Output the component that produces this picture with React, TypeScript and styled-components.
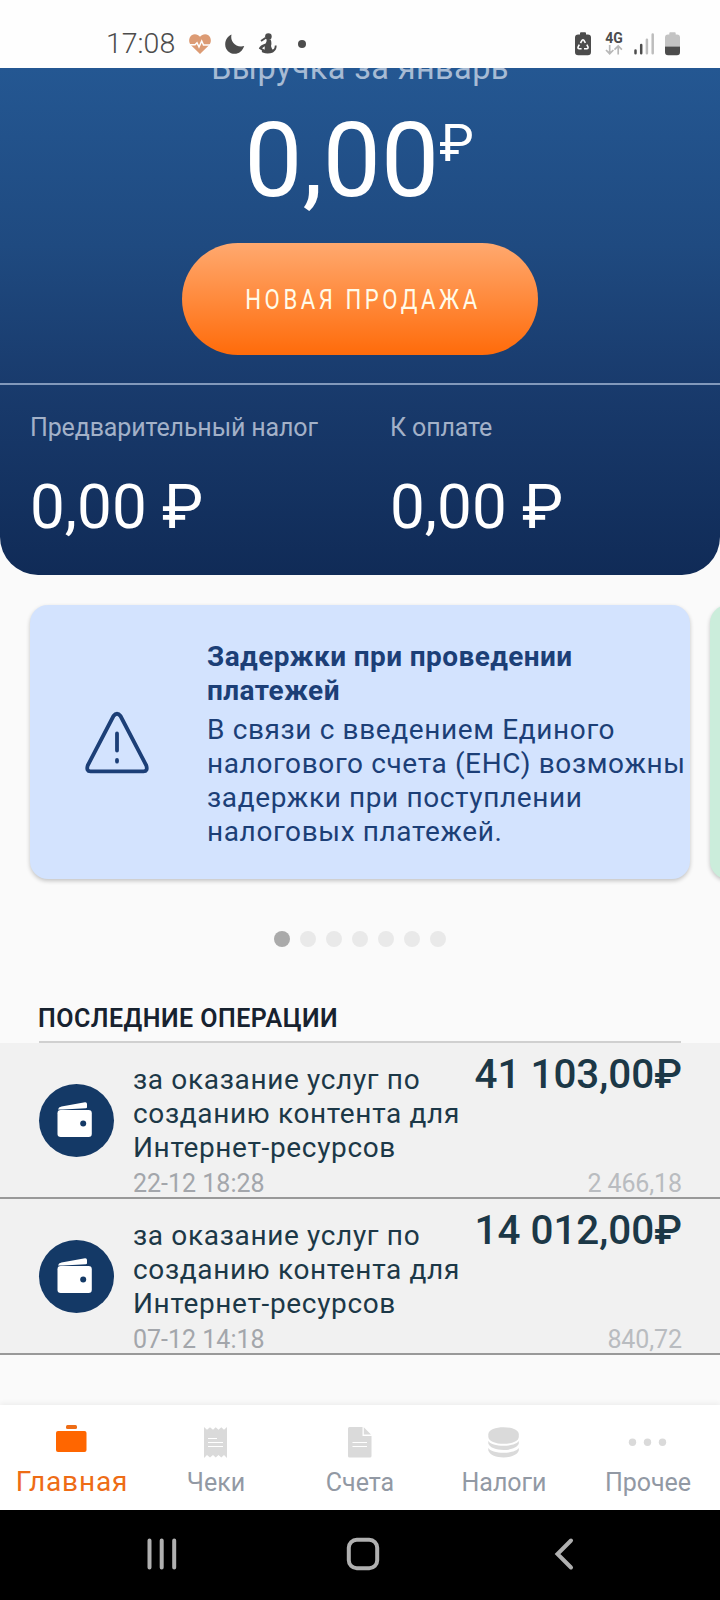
import React from 'react';
import styled, { createGlobalStyle } from 'styled-components';

const GlobalStyle = createGlobalStyle`
  *, *::before, *::after { box-sizing: border-box; }
  body {
    margin: 0;
    background: #fafafa;
    font-family: Roboto, "Liberation Sans", sans-serif;
  }
`;

const Screen = styled.div`
  width: 720px;
  height: 1600px;
  display: flex;
  flex-direction: column;
  overflow: hidden;
  background: #fafafa;
`;

/* ---------- status bar ---------- */

const StatusBar = styled.header`
  flex: none;
  height: 68px;
  padding: 19px 40px 0 106px;
  display: flex;
  justify-content: space-between;
  background: #fefefe;
  color: #4c4c4c;
`;

const StatusGroup = styled.div`
  display: flex;
  align-items: center;
  height: 49px;
`;

const Clock = styled.span`
  width: 83px;
  font-size: 28.5px;
  font-weight: 350;
  line-height: 48px;
  white-space: nowrap;
`;

const StatusIcon = styled.svg<{ $gap?: number }>`
  display: block;
  flex: none;
  margin-right: ${(p) => p.$gap ?? 0}px;
`;

const Network = styled.div`
  width: 18px;
  height: 24px;
  margin-right: 11px;
  display: flex;
  flex-direction: column;
  align-items: center;
  font-size: 14px;
  font-weight: 700;
  line-height: 12px;
`;

/* ---------- revenue panel ---------- */

const Hero = styled.section`
  flex: none;
  height: 507px;
  display: flex;
  flex-direction: column;
  align-items: center;
  overflow: hidden;
  border-radius: 0 0 38px 38px;
  background: linear-gradient(#245792 0%, #1f4a80 35%, #193b6d 62%, #102b57 100%);
  color: #fff;
`;

const HeroCaption = styled.div`
  flex: none;
  margin-top: -20px;
  font-size: 32.5px;
  line-height: 40px;
  letter-spacing: 0.4px;
  color: #a7bbd4;
`;

const Revenue = styled.div`
  flex: none;
  display: flex;
  margin: 13px 2px 0 0;
  font-size: 103.5px;
  line-height: 120px;
`;

const RevenueCurrency = styled.span`
  margin-top: 12px;
  font-size: 52px;
  line-height: 62px;
`;

const SaleButton = styled.button`
  flex: none;
  width: 356px;
  height: 112px;
  margin-top: 22px;
  padding: 2px 0 0;
  border: 0;
  border-radius: 56px;
  background: linear-gradient(#ffa96f, #ff6b0a);
  color: #fffbe9;
  font: 400 28px/110px Roboto, sans-serif;
`;

const SaleLabel = styled.span`
  display: inline-block;
  margin-right: -5px;
  letter-spacing: 4.5px;
  white-space: nowrap;
  transform: scaleX(0.79);
`;

const TaxRow = styled.div`
  flex: 1;
  width: 100%;
  margin-top: 28px;
  padding-top: 28px;
  border-top: 2px solid #8299bb;
  display: grid;
  grid-template-columns: 1fr 1fr;
`;

const TaxCell = styled.div`
  padding-left: 30px;
`;

const TaxLabel = styled.div`
  font-size: 25px;
  line-height: 30px;
  letter-spacing: -0.13px;
  color: #a3b1c8;
`;

const TaxValue = styled.div`
  margin-top: 28px;
  font-size: 62px;
  line-height: 72px;
  white-space: nowrap;
`;

/* ---------- notice carousel ---------- */

const Carousel = styled.div`
  flex: none;
  display: flex;
  gap: 20px;
  margin: 30px 0 0 30px;
`;

const NoticeCard = styled.article<{ $color: string }>`
  flex: none;
  width: 660px;
  height: 274px;
  display: flex;
  border-radius: 18px;
  background: ${(p) => p.$color};
  box-shadow: 0 2px 4px rgba(0, 0, 0, 0.22);
  color: #1c3f77;
`;

const NoticeIcon = styled.div`
  width: 177px;
  padding: 106px 0 0 54px;
`;

const NoticeText = styled.div`
  padding-top: 35px;
  font-size: 28px;
  line-height: 34px;
  white-space: nowrap;
`;

const NoticeTitle = styled.h2`
  margin: 0 0 5px;
  font-size: 28px;
  font-weight: 700;
  line-height: 34px;
  letter-spacing: 0.4px;
`;

const NoticeBody = styled.p`
  margin: 0;
  letter-spacing: 0.62px;
`;

const Pager = styled.div`
  flex: none;
  display: flex;
  justify-content: center;
  gap: 10px;
  margin-top: 52px;
`;

const PagerDot = styled.span<{ $active?: boolean }>`
  width: 16px;
  height: 16px;
  border-radius: 50%;
  background: ${(p) => (p.$active ? '#aaaaaa' : '#e9e9e9')};
`;

/* ---------- operations ---------- */

const SectionTitle = styled.h3`
  flex: none;
  height: 42px;
  margin: 54px 39px 0;
  border-bottom: 2px solid #d0d0d0;
  font-size: 25px;
  font-weight: 600;
  line-height: 36px;
  letter-spacing: 0.5px;
  text-indent: -1px;
  color: #17222f;
`;

const Operation = styled.div`
  flex: none;
  height: 156px;
  padding: 0 38px 0 39px;
  display: flex;
  border-bottom: 2px solid #999;
  background: #f1f1f1;
  color: #1c3847;
`;

const WalletBadge = styled.div`
  flex: none;
  width: 75px;
  height: 73px;
  margin: 41px 19px 0 0;
  border-radius: 50%;
  background: #143966;
`;

const OperationInfo = styled.div`
  flex: 1;
  padding-top: 20px;
  white-space: nowrap;
`;

const OperationName = styled.div`
  font-size: 28px;
  line-height: 34px;
  letter-spacing: 0.65px;
`;

const OperationDate = styled.div`
  margin-top: 4px;
  font-size: 25px;
  line-height: 30px;
  color: #a3a6ab;
`;

const OperationSums = styled.div`
  display: flex;
  flex-direction: column;
  align-items: flex-end;
  white-space: nowrap;
`;

const Amount = styled.div`
  padding-top: 8px;
  font-size: 40.4px;
  font-weight: 500;
  line-height: 48px;
`;

const Tax = styled.div`
  margin-top: 70px;
  font-size: 25px;
  line-height: 30px;
  letter-spacing: -0.1px;
  color: #b9bcc0;
`;

/* ---------- bottom navigation ---------- */

const TabBar = styled.nav`
  flex: none;
  height: 105px;
  margin-top: auto;
  display: grid;
  grid-template-columns: repeat(5, 1fr);
  background: #fff;
  box-shadow: 0 -2px 5px rgba(0, 0, 0, 0.05);
`;

const Tab = styled.div<{ $active?: boolean }>`
  display: flex;
  flex-direction: column;
  align-items: center;
  font-size: ${(p) => (p.$active ? 28 : 25)}px;
  line-height: 30px;
  color: ${(p) => (p.$active ? '#ee6c15' : '#9299a4')};
`;

const TabIcon = styled.svg`
  display: block;
  flex: none;
  width: 48px;
  height: 40px;
  margin-top: 17px;
`;

const TabLabel = styled.span<{ $active?: boolean }>`
  margin-top: ${(p) => (p.$active ? 5 : 6)}px;
  letter-spacing: ${(p) => (p.$active ? 0.85 : 0)}px;
`;

const SystemBar = styled.footer`
  flex: none;
  height: 90px;
  padding: 0 56px 3px 61px;
  display: grid;
  grid-template-columns: repeat(3, 201px);
  place-items: center;
  background: #000;
`;

const WalletIcon = () => (
  <svg width="75" height="73" viewBox="0 0 75 73" fill="#fff">
    <path d="M19 25.5 Q19.5 23 22.5 22.6 L46 18.2 Q48 18 48 20 V23.3 Q48 24.3 46.8 24.3 L24 25.5 Z" />
    <rect x="18.5" y="26" width="34.3" height="27" rx="3.2" />
    <circle cx="44.2" cy="39.4" r="3" fill="#143966" />
  </svg>
);

const operations = [
  { date: '22-12 18:28', amount: '41 103,00₽', tax: '2 466,18' },
  { date: '07-12 14:18', amount: '14 012,00₽', tax: '840,72' },
];

const grey = '#dadada';

export default function App() {
  return (
    <>
      <GlobalStyle />
      <Screen>
        <StatusBar>
          <StatusGroup>
            <Clock>17:08</Clock>
            <StatusIcon width="22" height="20" viewBox="0 0 22 20" $gap={14}>
              <path d="M11 20 L2 11.2 C-1 8 0 3.2 2.6 1.3 C5.4 -.8 9 .2 11 2.8 C13 .2 16.6 -.8 19.4 1.3 C22 3.2 23 8 20 11.2 Z" fill="#dc9b74" />
              <path d="M0 10.8 H6 L8 8.8 L10 13 L12.7 7 L14.5 11 H22" fill="none" stroke="#fefefe" strokeWidth="1.5" />
            </StatusIcon>
            <StatusIcon width="20" height="20" viewBox="0 0 20 20" $gap={13}>
              <path d="M6.5 .5 C4.8 7.8 11 14 19.2 12 C17.5 17 14 19.8 9.6 19.8 C4.5 19.8 .2 15.8 .2 10.4 C.2 6 2.6 2.2 6.5 .5 Z" fill="#4c4c4c" />
            </StatusIcon>
            <StatusIcon width="20" height="21" viewBox="0 0 20 21" $gap={19}>
              <circle cx="10.4" cy="3.6" r="3.3" fill="#4c4c4c" />
              <path d="M8.6 6 L12.6 6.4 Q14 9.5 13 13 Q13.6 15 14.4 16.6 Q16.6 16.4 16.8 12.6 L18.6 12.6 Q18.8 17 15 19.4 Q10 21.4 4.6 19.6 Q3.4 18.6 4 17.4 L.8 15.4 Q2 12 7.6 10.4 Q9 8.5 8.6 6 Z" fill="#4c4c4c" />
              <path d="M3 8 L7.8 4.8" stroke="#4c4c4c" strokeWidth="1.9" />
              <path d="M4 15.2 L6.8 13.2 L6.6 16.8 Z" fill="#fefefe" />
            </StatusIcon>
            <StatusIcon width="10" height="10" viewBox="0 0 10 10">
              <circle cx="5" cy="5" r="4" fill="#4c4c4c" />
            </StatusIcon>
          </StatusGroup>
          <StatusGroup>
            <StatusIcon width="16" height="24" viewBox="0 0 16 24" $gap={14}>
              <path d="M5 1.2 Q5 .3 6 .3 H10 Q11 .3 11 1.2 V2.6 H12.8 Q16 2.6 16 5.5 V20 Q16 23.3 12.8 23.3 H3.2 Q0 23.3 0 20 V5.5 Q0 2.6 3.2 2.6 H5 Z" fill="#4c4c4c" />
              <path d="M5.5 11 L7.2 8.2 Q8 7.2 8.8 8.2 L10.4 10.8 M11.8 12.6 L13 15 Q13.3 16.8 11.8 16.8 H9 M6.6 16.8 H4.2 Q2.6 16.6 3.1 15 L4.3 12.6" fill="none" stroke="#fff" strokeWidth="1.6" />
            </StatusIcon>
            <Network>
              4G
              <svg width="18" height="12" viewBox="0 0 18 12" fill="none" stroke="#b8b8b8" strokeWidth="1.7">
                <path d="M4.7 1 V9.5 M1 6 L4.7 9.7 L8.4 6 M13.2 10.5 V2 M9.5 5.6 L13.2 2 L16.9 5.6" />
              </svg>
            </Network>
            <StatusIcon width="21" height="22" viewBox="0 0 21 22" $gap={10} strokeLinecap="round" strokeWidth="2.5">
              <path d="M1.5 17.5 V20.2 M7.2 12 V20.2" stroke="#4c4c4c" />
              <path d="M12.9 6.7 V20.2 M18.7 1.5 V20.2" stroke="#bdbdbd" />
            </StatusIcon>
            <StatusIcon width="15" height="24" viewBox="0 0 15 24">
              <path d="M4.3 1.2 Q4.3 .3 5.3 .3 H9.7 Q10.7 .3 10.7 1.2 V2.6 H12 Q15 2.6 15 5.5 V14.5 H0 V5.5 Q0 2.6 3 2.6 H4.3 Z" fill="#c3c3c3" />
              <path d="M0 14.5 H15 V20 Q15 23.3 12 23.3 H3 Q0 23.3 0 20 Z" fill="#4c4c4c" />
            </StatusIcon>
          </StatusGroup>
        </StatusBar>

        <Hero>
          <HeroCaption>Выручка за январь</HeroCaption>
          <Revenue>
            0,00<RevenueCurrency>₽</RevenueCurrency>
          </Revenue>
          <SaleButton>
            <SaleLabel>НОВАЯ ПРОДАЖА</SaleLabel>
          </SaleButton>
          <TaxRow>
            <TaxCell>
              <TaxLabel>Предварительный налог</TaxLabel>
              <TaxValue>0,00 ₽</TaxValue>
            </TaxCell>
            <TaxCell>
              <TaxLabel>К оплате</TaxLabel>
              <TaxValue>0,00 ₽</TaxValue>
            </TaxCell>
          </TaxRow>
        </Hero>

        <Carousel>
          <NoticeCard $color="#d3e3fe">
            <NoticeIcon>
              <svg width="66" height="64" viewBox="0 0 66 64" fill="none" stroke="#1c3f77" strokeWidth="3.8" strokeLinecap="round" strokeLinejoin="round">
                <path d="M29.5 5 Q33 .5 36.5 5 L62.3 54.5 Q64 60.3 59.5 60.3 H6.5 Q2 60.3 3.7 54.5 Z" />
                <path d="M33 22.5 V39.5 M33 49 V50.6" />
              </svg>
            </NoticeIcon>
            <NoticeText>
              <NoticeTitle>
                Задержки при проведении
                <br />
                платежей
              </NoticeTitle>
              <NoticeBody>
                В связи с введением Единого
                <br />
                налогового счета (ЕНС) возможны
                <br />
                задержки при поступлении
                <br />
                налоговых платежей.
              </NoticeBody>
            </NoticeText>
          </NoticeCard>
          <NoticeCard $color="#cbeddb" />
        </Carousel>

        <Pager>
          {[0, 1, 2, 3, 4, 5, 6].map((i) => (
            <PagerDot key={i} $active={i === 0} />
          ))}
        </Pager>

        <SectionTitle>ПОСЛЕДНИЕ ОПЕРАЦИИ</SectionTitle>
        {operations.map((op) => (
          <Operation key={op.date}>
            <WalletBadge>
              <WalletIcon />
            </WalletBadge>
            <OperationInfo>
              <OperationName>
                за оказание услуг по
                <br />
                созданию контента для
                <br />
                Интернет-ресурсов
              </OperationName>
              <OperationDate>{op.date}</OperationDate>
            </OperationInfo>
            <OperationSums>
              <Amount>{op.amount}</Amount>
              <Tax>{op.tax}</Tax>
            </OperationSums>
          </Operation>
        ))}

        <TabBar>
          <Tab $active>
            <TabIcon viewBox="0 0 48 40" fill="#ff6600">
              <rect x="18" y="3" width="11" height="4" rx="1.5" fill="#ee6c15" />
              <rect x="8" y="9" width="30.5" height="21" rx="2" />
            </TabIcon>
            <TabLabel $active>Главная</TabLabel>
          </Tab>
          <Tab>
            <TabIcon viewBox="0 0 48 40" fill={grey}>
              <path d="M12 5 L15 7.8 L18 5.3 L21 7.8 L23.7 5.3 L26.5 7.8 L29.3 5.3 L32 7.8 L35 5 V36 L32 33 L29.3 35.4 L26.5 33 L23.7 35.4 L21 33 L18 35.4 L15 33 L12 36 Z" />
              <path d="M16 16.5 H25 M16 20.5 H31 M16 24.5 H31" stroke="#fff" strokeWidth="1.1" />
            </TabIcon>
            <TabLabel>Чеки</TabLabel>
          </Tab>
          <Tab>
            <TabIcon viewBox="0 0 48 40" fill={grey}>
              <path d="M13.5 5 H26.5 V14 H35.5 V34 Q35.5 35.5 34 35.5 H13.5 Q12 35.5 12 34 V6.5 Q12 5 13.5 5 Z M27.8 5.2 L35 12.6 H27.8 Z" />
              <path d="M16.5 20.5 H31 M16.5 24.5 H31" stroke="#fff" strokeWidth="1.1" />
            </TabIcon>
            <TabLabel>Счета</TabLabel>
          </Tab>
          <Tab>
            <TabIcon viewBox="0 0 48 40" fill={grey}>
              <path d="M8.3 12.5 C8.3 2.8 38.8 2.8 38.8 12.5 V14.5 C38.8 24.3 8.3 24.3 8.3 14.5 Z" />
              <path d="M8.3 18.8 C11 25.4 36 25.4 38.8 18.8 V21.6 C36 30.2 11 30.2 8.3 21.6 Z" />
              <path d="M8.3 25.8 C11 32.4 36 32.4 38.8 25.8 V28.6 C36 37.8 11 37.8 8.3 28.6 Z" />
            </TabIcon>
            <TabLabel>Налоги</TabLabel>
          </Tab>
          <Tab>
            <TabIcon viewBox="0 0 48 40" fill={grey}>
              <circle cx="8.5" cy="20.3" r="3.7" />
              <circle cx="23.5" cy="20.3" r="3.7" />
              <circle cx="38.5" cy="20.3" r="3.7" />
            </TabIcon>
            <TabLabel>Прочее</TabLabel>
          </Tab>
        </TabBar>

        <SystemBar>
          <svg width="34" height="34" viewBox="0 0 34 34" stroke="#b0b0b0" strokeWidth="4" strokeLinecap="round">
            <path d="M4.5 3.5 V30.5 M16.7 3.5 V30.5 M29.2 3.5 V30.5" />
          </svg>
          <svg width="34" height="34" viewBox="0 0 34 34" fill="none" stroke="#b0b0b0" strokeWidth="4">
            <rect x="2.8" y="2.8" width="28.4" height="28.4" rx="8" />
          </svg>
          <svg width="34" height="34" viewBox="0 0 34 34" fill="none" stroke="#b0b0b0" strokeWidth="4" strokeLinecap="round">
            <path d="M24 3.5 L10.5 17 L24 30.5" />
          </svg>
        </SystemBar>
      </Screen>
    </>
  );
}
